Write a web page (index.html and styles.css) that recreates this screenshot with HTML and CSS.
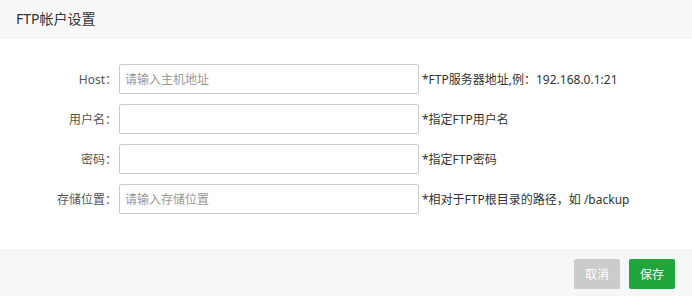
FILE: index.html
```html
<!DOCTYPE html>
<html lang="zh">
<head>
<meta charset="utf-8">
<link rel="stylesheet" href="styles.css">
</head>
<body>
<div class="dialog">
  <div class="dialog-header">FTP帐户设置</div>
  <div class="dialog-body">
    <div class="form-row">
      <label class="form-label">Host：</label>
      <input class="form-input" type="text" placeholder="请输入主机地址">
      <span class="form-help">*FTP服务器地址,例：192.168.0.1:21</span>
    </div>
    <div class="form-row">
      <label class="form-label">用户名：</label>
      <input class="form-input" type="text">
      <span class="form-help">*指定FTP用户名</span>
    </div>
    <div class="form-row">
      <label class="form-label">密码：</label>
      <input class="form-input" type="text">
      <span class="form-help">*指定FTP密码</span>
    </div>
    <div class="form-row">
      <label class="form-label">存储位置：</label>
      <input class="form-input" type="text" placeholder="请输入存储位置">
      <span class="form-help">*相对于FTP根目录的路径，如 /backup</span>
    </div>
  </div>
  <div class="dialog-footer">
    <button class="btn btn-cancel">取消</button>
    <button class="btn btn-save">保存</button>
  </div>
</div>
</body>
</html>
```
FILE: styles.css
```css
* { box-sizing: border-box; }
html, body { margin: 0; padding: 0; height: 100%; }
body {
  font-family: "Noto Sans", "Noto Sans CJK SC", sans-serif;
  background: #fff;
  color: #333;
}
.dialog {
  display: flex;
  flex-direction: column;
  height: 296px;
}
.dialog-header {
  height: 38px;
  line-height: 37px;
  padding-left: 16px;
  font-size: 14px;
  color: #333;
  background: #f8f8f8;
  border-bottom: 1px solid #eee;
}
.dialog-body {
  flex: 1;
  padding-top: 26px;
}
.form-row {
  display: flex;
  align-items: center;
  height: 30px;
  margin-bottom: 10px;
}
.form-label {
  width: 119px;
  padding-right: 2px;
  text-align: right;
  font-size: 12px;
  color: #555;
}
.form-input {
  width: 300px;
  height: 30px;
  border: 1px solid #ccc;
  border-radius: 2px;
  padding: 0 5px;
  font-family: inherit;
  font-size: 12px;
  color: #555;
  outline: none;
}
.form-input::placeholder { color: #999; }
.form-help {
  margin-left: 3px;
  font-size: 12px;
  color: #333;
}
.dialog-footer {
  height: 46px;
  background: #f6f8f8;
  border-top: 1px solid #eee;
  display: flex;
  justify-content: flex-end;
  align-items: flex-start;
  padding: 8px 17px 0 0;
  gap: 9px;
}
.btn {
  width: 46px;
  height: 30px;
  border: none;
  border-radius: 2px;
  font-family: inherit;
  font-size: 12px;
  color: #fff;
  padding: 0;
}
.btn-cancel { background: #cbcbcb; }
.btn-save { background: #20a53a; }
```
